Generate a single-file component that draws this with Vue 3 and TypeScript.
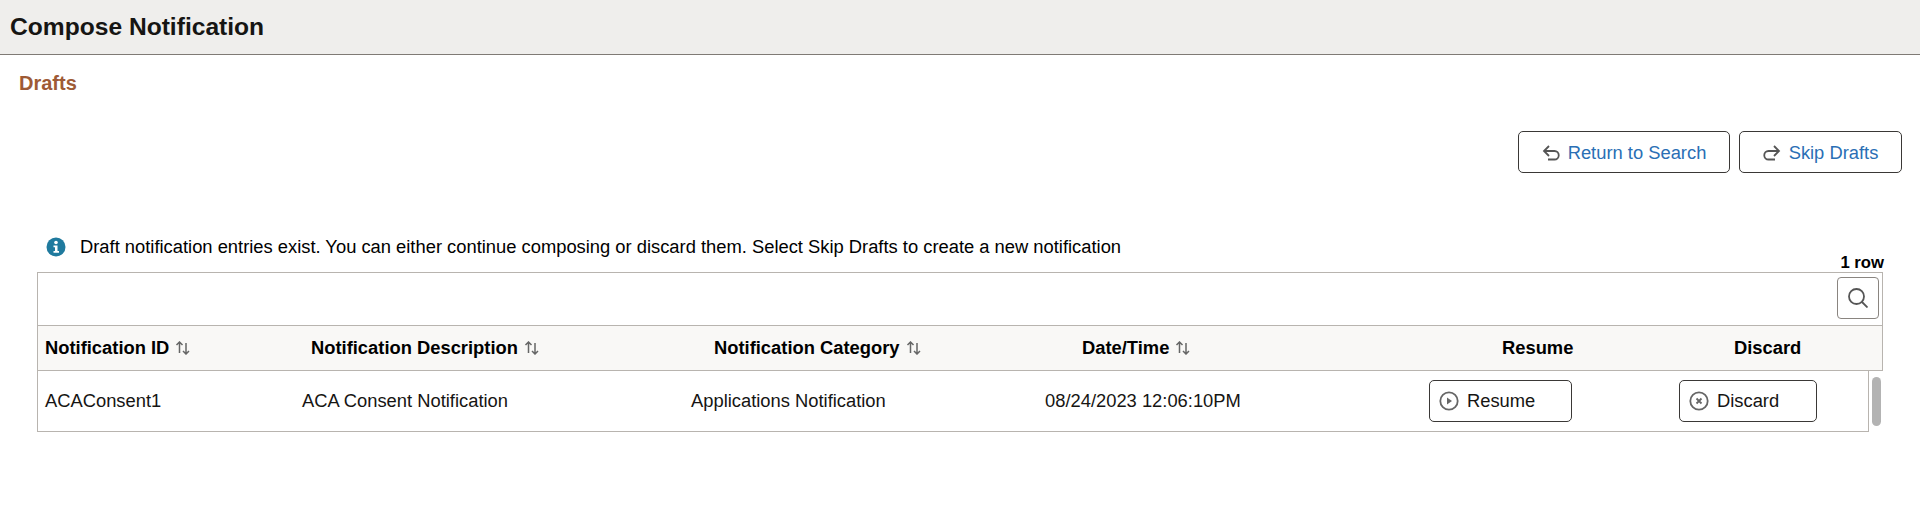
<script setup lang="ts">
const headers = [
  { label: 'Notification ID', cls: 'h-id', sort: true },
  { label: 'Notification Description', cls: 'h-desc', sort: true },
  { label: 'Notification Category', cls: 'h-cat', sort: true },
  { label: 'Date/Time', cls: 'h-date', sort: true },
  { label: 'Resume', cls: 'h-res', sort: false },
  { label: 'Discard', cls: 'h-dis', sort: false },
]
</script>

<template>
  <div class="page">
    <header class="top"><h1>Compose Notification</h1></header>
    <h2 class="sub">Drafts</h2>
    <div class="actions">
      <button class="btn nav ret">
        <svg width="18" height="16" viewBox="0 0 18 16" fill="none" stroke="#555" stroke-width="1.8"><path d="M7 1 2 6l5 5M2 6h10.500a4.250 4.250 0 0 1 0 8.500H6"/></svg>
        Return to Search
      </button>
      <button class="btn nav skip">
        <svg width="18" height="16" viewBox="0 0 18 16" fill="none" stroke="#555" stroke-width="1.8"><path d="m11 1 5 5-5 5M16 6H5.500a4.250 4.250 0 0 0 0 8.500H12"/></svg>
        Skip Drafts
      </button>
    </div>
    <div class="msg">
      <svg width="20" height="20" viewBox="0 0 20 20"><circle cx="10" cy="10" r="9.500" fill="#1f7a9e"/><circle cx="10" cy="5.500" r="1.800" fill="#fff"/><path d="M7.500 8.500H11.500V14H13V15.700H7.500V14H9V10.200H7.500Z" fill="#fff"/></svg>
      <span>Draft notification entries exist. You can either continue composing or discard them. Select Skip Drafts to create a new notification</span>
    </div>
    <div class="count">1 row</div>
    <div class="grid">
      <div class="toolbar">
        <button class="search" aria-label="Search">
          <svg width="20" height="20" viewBox="0 0 20 20" fill="none" stroke="#555" stroke-width="1.800"><circle cx="8.500" cy="8.500" r="7.500"/><path d="m14 14 5.500 5.500"/></svg>
        </button>
      </div>
      <div class="head">
        <div v-for="h in headers" :key="h.label" :class="['hc', h.cls]">
          {{ h.label }}
          <svg v-if="h.sort" width="16" height="14" viewBox="0 0 16 14" fill="none" stroke="#666" stroke-width="1.500"><path d="M4.500 12V1M1.500 4l3-3 3 3M11 2v11M8 10l3 3 3-3"/></svg>
        </div>
      </div>
      <div class="row">
        <div class="cell c-id">ACAConsent1</div>
        <div class="cell c-desc">ACA Consent Notification</div>
        <div class="cell c-cat">Applications Notification</div>
        <div class="cell c-date">08/24/2023 12:06:10PM</div>
        <div class="cell c-res">
          <button class="btn act res">
            <svg width="20" height="20" viewBox="0 0 20 20" fill="none" stroke="#666" stroke-width="1.800"><circle cx="10" cy="10" r="8.700"/><path d="M8 6.500 13 10l-5 3.500Z" fill="#666" stroke="none"/></svg>
            Resume
          </button>
        </div>
        <div class="cell c-dis">
          <button class="btn act dis">
            <svg width="20" height="20" viewBox="0 0 20 20" fill="none" stroke="#666" stroke-width="1.800"><circle cx="10" cy="10" r="8.700"/><path d="m7.500 7.500 5 5M12.500 7.500l-5 5" stroke-width="1.800"/></svg>
            Discard
          </button>
        </div>
        <div class="scroll"><span></span></div>
      </div>
    </div>
  </div>
</template>

<style scoped>
.page { width: 1920px; height: 506px; background: #fff; color: #000; font-family: "Liberation Sans", Arial, sans-serif; font-size: 18.35px; overflow: hidden; }
.top { height: 54px; background: #efeeec; border-bottom: 1px solid #7f7a75; display: flex; align-items: center; padding-left: 10px; box-sizing: content-box; }
h1 { margin: 0; font-size: 24.6px; font-weight: 700; color: #161513; }
.sub { margin: 17px 0 0 19px; font-size: 20px; line-height: 22px; font-weight: 700; color: #9e5a35; }
.actions { display: flex; justify-content: flex-end; gap: 9px; padding-right: 18px; margin-top: 37px; }
.btn { box-sizing: border-box; display: flex; align-items: center; background: #fff; border: 1px solid #3a3836; border-radius: 5px; font: inherit; height: 42px; padding: 0; }
.nav { color: #2a6fb5; justify-content: center; gap: 8px; padding-top: 2px; }
.ret { width: 212px; }
.skip { width: 163px; }
.msg { display: flex; align-items: center; gap: 14px; margin: 62px 0 0 46px; height: 24px; }
.count { text-align: right; width: 1884px; font-weight: 700; font-size: 16.7px; line-height: 19px; margin-top: -6px; }
.grid { margin-left: 37px; width: 1846px; }
.toolbar { box-sizing: border-box; height: 54px; border: 1px solid #b8b4af; display: flex; justify-content: flex-end; align-items: flex-start; padding: 4px 3px 0 0; }
.search { box-sizing: border-box; width: 42px; height: 42px; background: #fff; border: 1px solid #8a8580; border-radius: 4px; display: flex; align-items: center; justify-content: center; padding: 0; }
.head { box-sizing: border-box; height: 45px; background: #f9f8f6; border: 1px solid #b8b4af; border-top: 0; display: flex; align-items: center; font-weight: 700; }
.hc { display: flex; align-items: center; gap: 6px; white-space: nowrap; }
.h-id { margin-left: 7px; width: 266px; }
.h-desc { width: 403px; }
.h-cat { width: 368px; }
.h-date { width: 420px; }
.h-res { width: 232px; }
.row { box-sizing: border-box; width: 1832px; height: 61px; border: 1px solid #b8b4af; border-top: 0; display: flex; align-items: center; position: relative; color: #161513; }
.cell { white-space: nowrap; }
.c-id { margin-left: 7px; width: 257px; }
.c-desc { width: 389px; }
.c-cat { width: 354px; }
.c-date { width: 384px; }
.c-res { width: 250px; }
.act { height: 42px; padding-left: 9px; gap: 8px; color: #161513; }
.res { width: 143px; }
.dis { width: 138px; }
.scroll { position: absolute; left: 1834px; top: 6px; width: 9px; height: 49px; }
.scroll span { display: block; height: 100%; border-radius: 5px; background: #b3b3b3; }
</style>

<style>
html, body { margin: 0; background: #fff; }
</style>
